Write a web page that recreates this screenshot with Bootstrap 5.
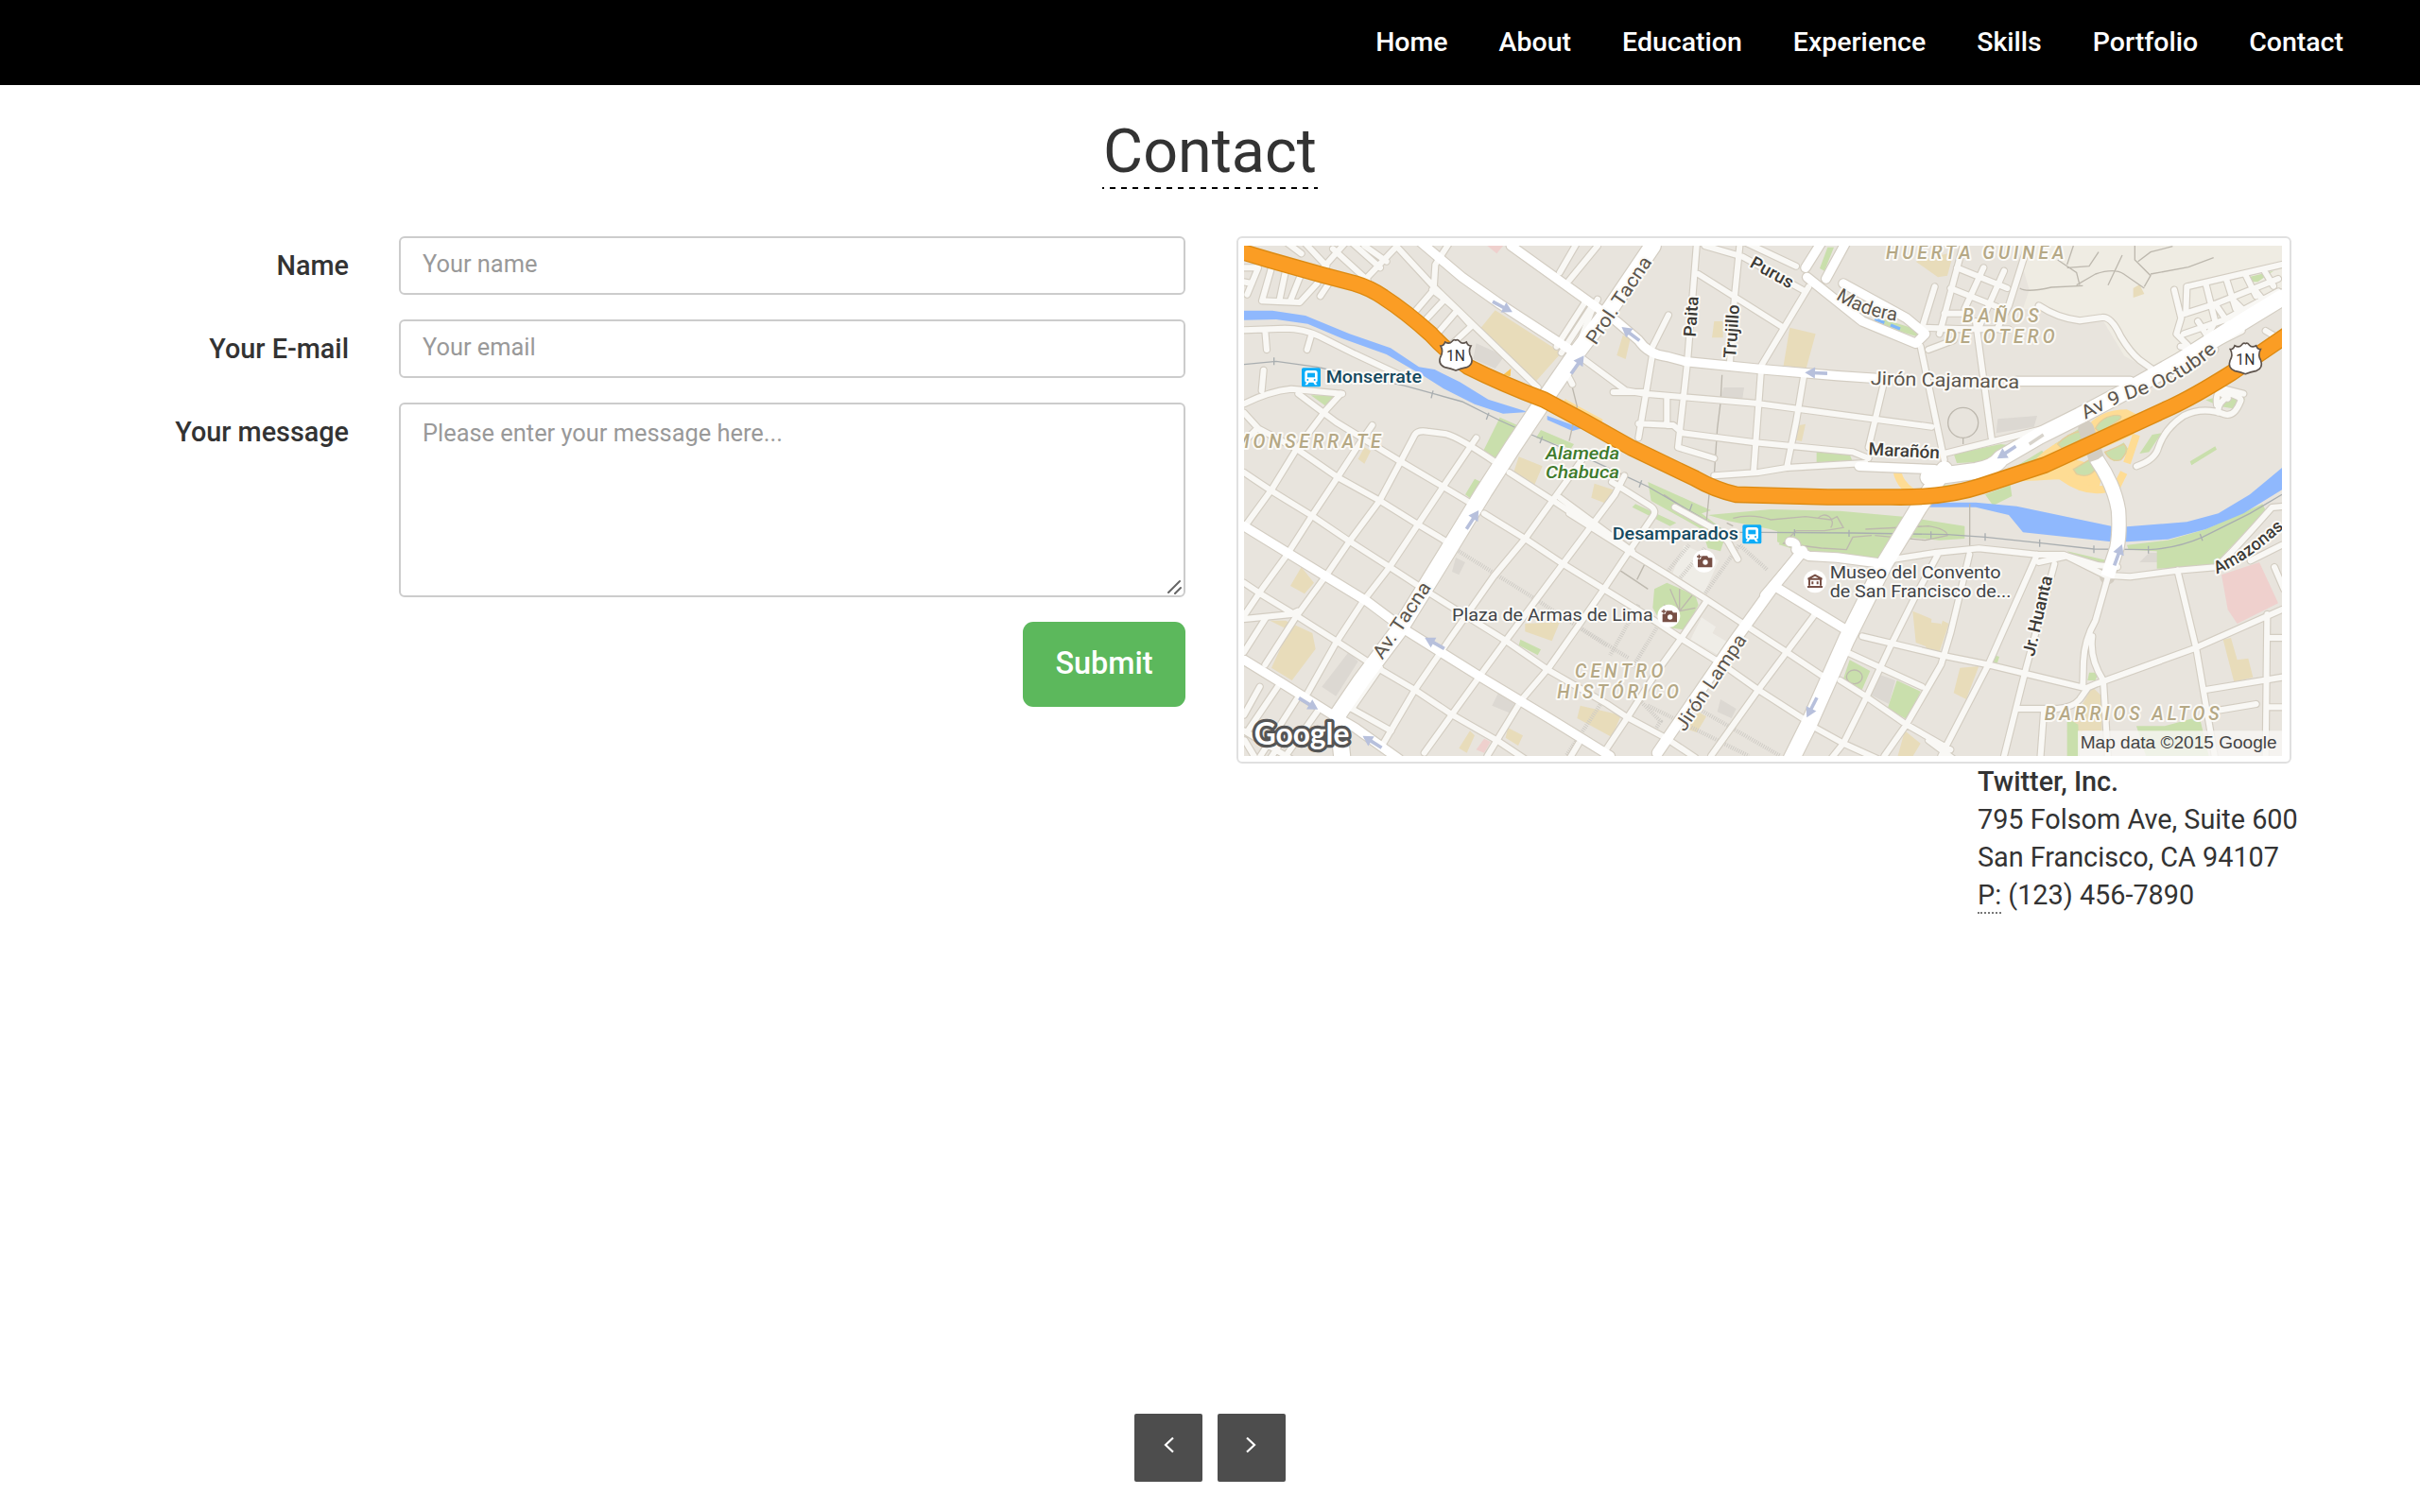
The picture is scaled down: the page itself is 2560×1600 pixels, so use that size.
<!DOCTYPE html>
<html lang="en">
<head>
<meta charset="utf-8">
<meta name="viewport" content="width=device-width, initial-scale=1">
<title>Contact</title>
<link rel="stylesheet" href="https://cdn.jsdelivr.net/npm/bootstrap@5.3.0/dist/css/bootstrap.min.css">
<style>
body{font-family:Roboto,"Liberation Sans",sans-serif;font-size:28.8px;line-height:40px;color:#333;background:#fff;height:1600px;overflow:hidden}
.topbar{height:90px;background:#000;padding:0 54px 0 0}
.topbar .nav-link{color:#fff;font-size:28.5px;font-weight:500;padding:0 27px;line-height:89px;white-space:nowrap}
.page-title{font-size:64.6px;font-weight:400;line-height:80px;height:80px;margin:30px 0 50px;width:228px;text-align:center;white-space:nowrap;color:#333;background:repeating-linear-gradient(90deg,#000 0 6px,transparent 6px 12px) -4px 100%/240px 2px no-repeat}
.contact-form{width:1254px}
.field-label{width:422px;padding:11px 53px 0 0;text-align:right;font-weight:500}
.field-row{margin-bottom:26px}
.form-control{border:2px solid #ccc;border-radius:6px;font-size:25.4px;line-height:36px;color:#555;height:62px;padding:9px 24px 13px 23px}
.form-control::placeholder{color:#999;opacity:1}
textarea.form-control{height:206px;resize:none;padding-top:12px}
.grip{position:absolute;right:4px;bottom:3px}
.btn-send{background:#5cb85c;color:#fff;width:172px;height:90px;border-radius:11px;font-size:32.4px;font-weight:500;padding:0 0 2px;border:0}
.map-pane{width:1116px;margin-left:54px}
.map-frame{border:2px solid #e0e0e0;border-radius:6px;height:558px;padding:8px 8px 6px 6px}
.map-frame svg{display:block;width:1098px;height:540px}
.office{margin:-1px 0 0 784px;white-space:nowrap}
.office strong{font-weight:500}
.office abbr{text-decoration:none;cursor:help;border-bottom:2px dotted #777;padding-bottom:1px}
.pager-bar{gap:16px;padding-bottom:32px}
.pager-btn{width:72px;height:72px;background:#4d4d4d;border-radius:2px;border:0;padding:0 0 6px}
.lbl{font-family:Roboto,sans-serif;stroke:#fbfaf7;stroke-width:12;stroke-linejoin:round;paint-order:stroke}
.area{fill:#b5a885;font-style:italic;font-weight:500;font-size:58px}
.street{fill:#3c3a36;font-weight:500;font-size:55px}
.avenue{fill:#5b554c;font-size:60px}
.place{fill:#3f4347;font-size:57px}
</style>
</head>
<body class="d-flex flex-column">
<nav class="topbar d-flex justify-content-end flex-shrink-0">
  <ul class="nav flex-nowrap">
    <li class="nav-item"><a class="nav-link" href="#">Home</a></li>
    <li class="nav-item"><a class="nav-link" href="#">About</a></li>
    <li class="nav-item"><a class="nav-link" href="#">Education</a></li>
    <li class="nav-item"><a class="nav-link" href="#">Experience</a></li>
    <li class="nav-item"><a class="nav-link" href="#">Skills</a></li>
    <li class="nav-item"><a class="nav-link" href="#">Portfolio</a></li>
    <li class="nav-item"><a class="nav-link" href="#">Contact</a></li>
  </ul>
</nav>
<main class="flex-grow-1 d-flex flex-column">
  <h1 class="page-title align-self-center flex-shrink-0">Contact</h1>
  <div class="d-flex align-items-start">
    <form class="contact-form flex-shrink-0">
      <div class="d-flex field-row"><label class="field-label flex-shrink-0" for="n">Name</label><input id="n" class="form-control" placeholder="Your name"></div>
      <div class="d-flex field-row"><label class="field-label flex-shrink-0" for="e">Your E-mail</label><input id="e" class="form-control" placeholder="Your email"></div>
      <div class="d-flex field-row"><label class="field-label flex-shrink-0" for="m">Your message</label>
        <div class="position-relative flex-fill"><textarea id="m" class="form-control" placeholder="Please enter your message here..."></textarea>
          <svg class="grip" width="16" height="16" viewBox="0 0 16 16" fill="none" stroke="#666" stroke-width="2" stroke-linecap="round"><path d="M2 14 14 2M9 15 15 9"/></svg></div></div>
      <div class="d-flex justify-content-end"><button type="button" class="btn btn-send">Submit</button></div>
    </form>
    <section class="map-pane flex-shrink-0">
      <div class="map-frame">
      <svg viewBox="48 60 3294 1620" preserveAspectRatio="none">
        <defs>
          <g id="minor">
            <!-- north-west -->
            <path d="M170 40l60 45M240 50l70 75M330 70l110 100M390 50l90 80M370 50l-80 90M530 60l120 130 330 320M525 70l-95 100M430 60l70 50M700 50l-45 70-5 80-60 70M645 200l40 30-65 70M685 230l40 35-60 70M725 265l45 50-70 65M1105 50l-55 95M1150 255l-95 145M1130 240l-90 140M48 130h45l-35 85M48 175l25 5M135 130l-30 105 120 5 55-60M180 140l-20 95M225 160l-30 75M320 175l-30 45"/>
            <path d="M48 328l130-5q60 0 110 25l110 55 160 75M115 330l5 60M262 342l-14 48M48 562q80-40 150-47l162 15M110 455l-6 65"/>
            <!-- west blocks -->
            <path d="M55 945l80-110 80-130 90-120 50-55M48 1235l57-85 80-110 80-125 80-120 75-115 35-50M48 1350l70-110M115 1390l100-155 95-130 75-110 93-125 67-125 45-85q10-15 40-10l60 8q40 10 160 92M250 1480l90-160 85-130 85-110 90-135 80-120 105-155"/>
            <path d="M48 1550l50-90M60 1600l95-140M100 1680l115-180M180 1680l100-140M50 1630l30 50M48 1600l150 90M130 1690l60-90"/>
            <path d="M48 780l82 55 130 80 125 85 125 80 130 85 240 150 130 90 190 110 60 40 130 70 90 60M48 590l45 50 122 65 130 90 135 75 120 75 100 60M90 640l-60 60M220 530l120 90 205 125 135 80 100 60M48 1130l52 35 115 70 125 80 100 65M48 1245l150-15 20-10M390 1530l125 70M480 1405l110 65 120 80 140 80 90 60"/>
            <!-- centre blocks -->
            <path d="M890 780l140 90 120 80 120 80 130 80 110 70 130 85 130 85 120 80M810 910l130 80 120 80 130 80 130 80 120 80 120 75 120 85 140 90M1860 1590l90 50 110 50M1050 860l230 170M1150 950l70 45M1080 910l190 120"/>
            <path d="M390 1530l90-130M490 1640l100-170 110-160 140-200 100-120 90-125 90-125M620 1670l90-125 105-145 70-95 175-235 90-120 75-100 30-60M820 1680l110-180 85-100 95-135 80-115 80-120 75-110q15-20-10-35l-120-75M1190 1670l80-120 90-140 80-110 75-110M1530 1680l150-210 90-120 90-120M1080 1690l30-50"/>
            <path d="M1415 890l100 55q60 30 80 75l20 35"/>
            <!-- east of the avenue -->
            <path d="M1910 1690l40-50 70-140 80-170 80-160 70-130M2080 1680l70-100 110-190 30-100 60-250M2260 1680l150-290 155-350M2460 1680l70-280 90-330M2575 1690l12-160M1960 1350l240 110M1940 1440l80 50 130 90 140 80M2010 1300l250 60 150 30 310 75 35-15 305-110 282-125M2500 1530h130q50-5 70-30l25-35M2220 1630l80 60M2110 1055l130-20 140-14 190 20h80l130 65 80 5 150-20 120-10q30-20 180-190l82-8M2570 1065l90-20 100 30 60 5M2790 1110l-40 140q-35 60-38 130l-2 75M2740 1300q-10 70 35 140l15 250M3010 1090l60 250 60 350M3295 1230l-5 460M3100 1470l242-40M3300 1305h42M3300 1525h42M3140 1535l120-20M3318 1080l30 70M3342 1010l-100 50"/>
            <!-- north-centre blocks -->
            <path d="M1485 50l-30 380-30 270 115 35M1622 50l-17 170-15 210M1510 60l120 35 190 105M1640 50l160 75M1490 150l270 170M1840 190l-150 250-25 340M1825 470l-25 150-30 145M2080 490l-50 210M1125 420l135 100 60 10 350 30 560 75M1220 525h100M1345 400l-45 270M1395 280l-40 80-10 20M1390 540v90M1300 625l110 5 30 25 230 30 310 30 50 20M1540 790l140-10 90-15 250-15M2195 380l75 360M2240 190l-40 130 140 5M1080 170l90-110M1080 480l10 20M1100 400l50-130 20-40"/>
            <path d="M2330 60l-75 280M2310 130l160 65M2290 195l150 60M2395 130l-60 130M2460 140l-80 180M2535 60l-60 190-35 70M2255 325h220M2220 390l80-30M2270 275h60M2370 300l50 370M2270 720l240-60 120-30M2570 250q60 40 130 48l70-10q30-5 60 60 30 50 60 75l70 50"/>
            <path d="M3040 190l302-70M3000 200l22 90-15 50 35 35M3040 190l-3 85M3100 180l30 120-50 95M3165 165l30 95M3225 150l35 70M3285 138l30 50M3020 280l110-35 200-80M3030 340l130-45 170-90M3020 380l110 10M3015 470q0-40 60-70l140-70M3140 520l30 25M3140 590q-5-30 30-50M2880 760q60-20 70-60 20-60 80-100 60-30 130-5 30 10 50-40 10-15-50-30-30-10-25 40M3160 515l60 15M3290 330l50 30M3075 300l45 70M3130 245l55 80M3190 235l60 60M3260 205l40 50"/>
          </g>
          <g id="midroad">
            <path d="M48 950l252 155 140 85 120 90 240 150 200 120 210 130M48 1375l122 75 160 100 70 40 140 100M610 50l130 110 120 85 230 150M895 60l285 205 50 35 70 60q30 45 90 52l60 16 250 25 230 20 150 10M2500 490h360M1730 1140l230 140M1780 1000q25 0 20 25l40 20 90 5 150 20M1700 1170l120-140"/>
            <path d="M1835 160l175 140 170 70 30-30-60-50-200-110M1830 130l50-80M1895 165l60-110M2000 760l240 10"/>
          </g>
          <g id="avenues">
            <path d="M1345 60l-135 200-110 145-100 145-100 150-90 140-110 180-160 260-120 160-75 110 15 140"/>
            <path d="M2270 770l-80 120-110 180-120 240-120 270-60 120"/>
            <path d="M2220 795l150-20q60-10 80-40l120-70 130-65 160-85 160-90 150-95 172-105"/>
          </g>
          <path id="lampa" d="M1820 1030l-90 110-130 180-240 350"/>
          <g id="bridge"><path d="M2720 640l35 100q55 80 68 160 5 70-5 120l-30 90"/></g>
          <path id="hwy" d="M30 76l100 30 170 48 100 26q50 15 90 43 70 45 150 117 50 55 120 105 110 55 240 104l130 70 150 84 200 96q60 35 130 51l290 8h200q170 4 290-36l200-66 400-184q70-32 190-107l190-130"/>
          <path id="octPath" d="M2718 612Q2790 570 2865 545 3020 500 3140 390"/>
          <path id="madPath" d="M1925 228Q2000 282 2125 300"/>
          <path id="amaPath" d="M3135 1102Q3240 1060 3370 935"/>
          <g id="shield"><path d="M-48-30q10 0 14-12 14 8 22-2 6-8 12-4 6-4 12 4 8 10 22 2 4 12 14 12-10 18 1 36 8 22-14 32-20 4-35 10-15-6-35-10-22-10-14-32 11-18 1-36z" fill="#fff" stroke="#5d534c" stroke-width="5"/><text y="18" text-anchor="middle" font-family="Roboto" font-size="50" fill="#333" textLength="60" lengthAdjust="spacingAndGlyphs">1N</text></g>
          <g id="way" fill="#b7c0dc" stroke="#b7c0dc"><path d="M-35 0H12" stroke-width="11"/><path d="M4-18 36 0 4 18z" stroke="none"/></g>
          <g id="train"><rect x="-30" y="-30" width="60" height="60" rx="5" fill="#0cacf7"/><path d="M-20-14q0-8 8-8h24q8 0 8 8v24q0 6-6 6l6 8h-8l-5-8h-14l-5 8h-8l6-8q-6 0-6-6z" fill="#fff"/><path d="M-12-14h24v14h-24z" fill="#0cacf7"/><circle cx="-11" cy="8" r="3" fill="#0cacf7"/><circle cx="11" cy="8" r="3" fill="#0cacf7"/></g>
          <g id="photo"><circle r="36" fill="#fff"/><path d="M-18-4h8l5-10h14l4 6h11v26h-42zM-23-14h14M-16-21v14" fill="#774f45" stroke="#774f45" stroke-width="4"/><circle cx="4" cy="4" r="8" fill="#fff"/></g>
        </defs>
        <rect x="0" y="0" width="3400" height="1700" fill="#e8e4dd"/>
        <path d="M2500 60h842v180l-330 220-60 10-110-60-70-115-252-35 20-60z" fill="#efece3"/>
        <!-- public buildings and plots -->
        <g fill="#e8dcba">
          <path d="M845 265l210 135-80 90-175-170zM1540 300h28v52h-35zM1780 320l82 20-30 110-72-10zM1250 345l24 10-15 65-28-12zM1810 630l20-4-12 55-20-4zM2180 110l120-30-20 75-30 5zM2870 195l20-12 15 30-35 12zM920 730l75 30-30 70-65-40zM1160 815l60 20-20 45-50-20zM430 700l20 12-20 40-20-15zM230 1080l40 50-30 35-45-25zM130 1250h50l85 40 10 50-75 100-65-40 55-120zM940 1260l110-5-25 60-85-30zM1115 1520l130 30-30 70-110-60zM765 1600l15 15-25 55-25-15zM885 1590l48 25-15 32-40-25zM2170 1220l60 25-10 90-40-15zM2265 1250l20 10-30 90-20-10 20-60zM2220 1255l40 5-10 95-40-5zM2320 1400l60-5-40 105-40-20zM2145 1600l50 40-30 50h-45zM1490 1540l25 15-30 50-30-10zM3155 1310l25-5 20 70 35-5 15 60-60 15zM2740 1460l30 30 0 110h-60l-40 80-10-80z"/>
        </g>
        <path d="M380 1350l30 30-70 110-45-30zM720 1050l30 15-20 40-22-10zM855 1480l55 20-15 45-60-25zM1570 510h65l-5 35h-70zM2440 610l125-10-10 35-120 20zM2060 1420l55 20-20 75-60-30zM1560 1500l50 30-15 30-45-20zM785 370l90 40-30 40-70-30zM2990 1035h-70l-30 30h60z" fill="#dcd8d2"/>
        <path d="M1500 1240l45 30-10 20 50 30 5 60-125-70zM1445 1010l110 50-55 120-100-60z" fill="#efede7"/>
        <g fill="#f0cdcb"><path d="M3150 1105l120-40 60 130-130 65-30-45zM820 60h50l-20 25zM810 1625l20 10-20 35-25-10z" fill-opacity=".9"/></g>
        <g fill="#c9dfac">
          <path d="M860 605l68 30-75 103-48-22zM990 645l105 45-10 15-110-35zM260 535h78l-22 40zM780 800l24 12-38 50-16-12zM1290 880l130 60-20 10-120-60zM1520 915l200-18 220 5 200 18 195 30v40l-80 5-85-8-100 70-230-20-95-28 20-35-50-15-130-25zM1330 810l200 90-30 10 80 60-20 60-40-10-20-60-160-90zM1350 1150l40-20 90 40 10 30-40 80-70-10-35-60zM925 1310l65 32-10 18-60-32zM1740 960l70 20-30 40-40-20z"/>
          <path d="M2850 1010l130-15 120-35 180-80 10 20-170 180-175 5v-55l-90-5zM2660 1030l130 30-10 15-60-5zM1900 65h20l-30 75-15-8zM2050 285l130 40 10 25-100-30zM1865 712l105 10 10 25-115 5zM3235 160l80-20-50 35h-30zM1970 1375l65 35-30 70-60-30zM2120 1440l75 35-40 90-65-35zM2880 1585h90l110-30 30 125h-200zM2660 1560l35 20 5 100h-40zM2430 1360l15 5-8 25-15-5zM2730 1415h30l-10 25h-25z"/>
          <path d="M2300 720l150-30 40 5-60 50-120 5zM2450 790l130-80 10 10-130 90zM2620 690l80-50 30 10-110 60zM2730 640l50-40 50 5-40 50zM2780 720l60-35 20 30-50 30zM3100 550l60-15 65 10-20 35-60-10zM2890 720l40-60 30-5-40 60zM3050 745l80-48 5 10-80 50zM2260 820h60v20l-70 10zM2400 850l80-30 5 35-60 30z"/>
        </g>
        <!-- interchange ramps -->
        <path d="M2590 710q50-35 130-70 40-60 130-60l40 20-20 60-180 80q100 20 70 90-60 10-90-30-120 5-190 10" fill="#fedc94"/>
        <path d="M2640 790q90 70 180 30l20-40M2880 660l-30 90" fill="none" stroke="#fedc94" stroke-width="24"/>
        <g fill="#c9dfac" stroke="#e3cd9b" stroke-width="4"><path d="M2630 690q30-35 78-42l-5 30-60 25zM2750 640q20-40 70-42 20 2 5 15l-60 40zM2780 715l60-25q20 20-10 50-30 10-50-25zM2680 770l50-30 20 30q-20 30-60 15z"/></g>
        <path d="M2120 770q5 45 50 75" fill="none" stroke="#fedc94" stroke-width="26"/>
        <path d="M1060 560l120 65" stroke="#fedc94" stroke-width="30"/>
        <path d="M870 470l25-20-2 25z" fill="#f9c558"/>
        <!-- river -->
        <path d="M48 266l90 0 105 16 140 58 130 45 90 60 50 8 80 40 90 55 127 40-80 5-90-30-100-50-60-38-120-70-140-50-110-47-100-14-102 2zM1010 600l110 40-30 8-80-35zM2170 875h200l130 12 300 63 50 2 190-15 100-27 100-60 102-85v70l-122 75-120 50-120 32-130 8h-50l-280-30-45-55-105-25h-200z" fill="#8fb8fd"/>
        <path d="M2050 293l30 12M2100 312l30 12" stroke="#7db6fb" stroke-width="10"/>
        <!-- paths, hill tracks and railway -->
        <g fill="none" stroke="#bdb8ae" stroke-width="4">
          <path d="M2510 195q20 15 100-3l100-5M2630 105l60 40 10 40M2660 130l70-5 30-45M2690 185l60-35q60-20 90 0l65 45M2790 185l45-95M2875 60v45l50 50-20 35M2885 110l40-30 70-18M2925 150l120-22 80-30M2680 60l-20 60"/>
          <circle cx="2330" cy="622" r="48"/><path d="M2330 670v20M2351 880v150M1525 840l-10 100M1600 950l-20-10M1565 470l-5 90-10 80-10 150M1090 510l15 60-25 110M1240 1090l90 60M1320 1070l-25 50M1380 850l60 40" />
          <path d="M1600 925q60-15 120 5l110-10 80 10 20-10 20 35-60 10h-90l-40 40 120 15 80 5 20-40 60-5M1870 925a25 25 0 1 1 40 30M1960 1430a25 22 0 1 0 50-2 25 22 0 1 0-50 2M1400 1150l30 70M1430 1220l40-50M1430 1220l50-10M1430 1220l-50-20M1430 1220v-70M2020 960l200-10q60 10 60 30l-70 15-160-15"/>
          <path d="M48 437l102-10 130 18 280 60 90 25 90 25 120 60 100 45 200 85 170 80 130 75 120 70 110 0 290 2 300 5 120 8 170 18 175 20 175 2q90-5 170-40l150-75 102-60" stroke="#a9aeb0"/>
          <path d="M143 415v24M648 520l-6 24M825 590l-8 22M995 665l-8 22M1310 805l-8 22M1470 880l-8 22M1795 960v22M1968 962v22M2228 967v22M2400 973v24M2573 992v24M2745 1012v24M2918 1013v24M3082 975l8 22" stroke="#a9aeb0"/>
        </g>
        <g fill="none" stroke="#cfccc6" stroke-width="13" stroke-dasharray="3 4"><path d="M730 1030l240 150 230 150M1110 1270l160 100M1300 1200l-90 160M1390 1220l-110 180M1500 1180l120-170 90 80M1330 1520l320 160M1190 1500l-120 180M1490 1530l260 150M1310 1510l60 60-20 30M1380 1110l80-100M1420 1130l90-110"/></g>
        <!-- roads: casing first, surface second -->
        <g fill="none" stroke-linejoin="round" stroke-linecap="round">
          <g stroke="#d3cdc2"><use href="#minor" stroke-width="25"/><use href="#midroad" stroke-width="35"/><use href="#lampa" stroke-width="40"/><use href="#avenues" stroke-width="58"/><use href="#bridge" stroke-width="50"/></g>
          <use href="#minor" stroke="#f9f8f5" stroke-width="18"/>
          <use href="#midroad" stroke="#fff" stroke-width="28"/>
          <use href="#lampa" stroke="#fff" stroke-width="33"/>
          <use href="#avenues" stroke="#fff" stroke-width="51"/>
          <use href="#hwy" stroke="#dc8a12" stroke-width="53"/>
          <use href="#hwy" stroke="#fb9d24" stroke-width="45"/>
        </g>
        <use href="#bridge" fill="none" stroke="#fff" stroke-width="43" stroke-dasharray="0 105 600"/>
        <path d="M2540 690l45-30" stroke="#d8d4cc" stroke-width="10"/>
        <use href="#way" transform="translate(868 254) rotate(28)"/>
        <use href="#way" transform="translate(1106 438) rotate(-55)"/>
        <use href="#way" transform="translate(1275 340) rotate(217)"/>
        <use href="#way" transform="translate(1864 464) rotate(182)"/>
        <use href="#way" transform="translate(2468 716) rotate(147)"/>
        <use href="#way" transform="translate(773 930) rotate(-57)"/>
        <use href="#way" transform="translate(653 1322) rotate(209)"/>
        <use href="#way" transform="translate(252 1514) rotate(31)"/>
        <use href="#way" transform="translate(455 1635) rotate(212)"/>
        <use href="#way" transform="translate(1850 1526) rotate(117)"/>
        <use href="#way" transform="translate(2822 1042) rotate(-70)"/>
        <use href="#shield" transform="translate(720 408)"/>
        <use href="#shield" transform="translate(3226 419)"/>
        <use href="#train" transform="translate(261 478)"/>
        <use href="#train" transform="translate(1660 976)"/>
        <use href="#photo" transform="translate(1508 1061)"/>
        <use href="#photo" transform="translate(1396 1235)"/>
        <g transform="translate(1860 1126)"><circle r="36" fill="#fff"/><path d="M-22-8 0-20 22-8zM-18-5v18M18-5v18M-24 17h48M-8 0v9M8 0v9" fill="none" stroke="#774f45" stroke-width="6"/></g>
        <!-- labels -->
        <g class="lbl">
          <g class="area">
            <text x="16" y="702" textLength="466">MONSERRATE</text>
            <text x="2085" y="103" textLength="565">HUERTA GUINEA</text>
            <text x="2328" y="302" textLength="242">BAÑOS</text>
            <text x="2273" y="368" textLength="348">DE OTERO</text>
            <text x="1098" y="1431" textLength="280">CENTRO</text>
            <text x="1042" y="1497" textLength="386">HISTÓRICO</text>
            <text x="2588" y="1566" textLength="555">BARRIOS ALTOS</text>
          </g>
          <g fill="#15495f" font-size="56" font-weight="500">
            <text x="308" y="496" textLength="304" lengthAdjust="spacingAndGlyphs">Monserrate</text>
            <text x="1217" y="993" textLength="400" lengthAdjust="spacingAndGlyphs">Desamparados</text>
          </g>
          <g fill="#3e7a2c" font-size="57" font-style="italic" font-weight="500"><text x="1005" y="739" textLength="234" lengthAdjust="spacingAndGlyphs">Alameda</text><text x="1005" y="798" textLength="234" lengthAdjust="spacingAndGlyphs">Chabuca</text></g>
          <g class="avenue">
            <text transform="translate(1164 378) rotate(-56)" textLength="322" lengthAdjust="spacingAndGlyphs">Prol. Tacna</text>
            <text transform="translate(487 1376) rotate(-56)" textLength="280" lengthAdjust="spacingAndGlyphs">Av. Tacna</text>
            <text transform="translate(1446 1605) rotate(-56)" textLength="355" lengthAdjust="spacingAndGlyphs">Jirón Lampa</text>
            <text x="2036" y="501" textLength="472" lengthAdjust="spacingAndGlyphs" transform="rotate(1.500 2036 501)">Jirón Cajamarca</text>
            <text><textPath href="#madPath" textLength="208" lengthAdjust="spacingAndGlyphs">Madera</textPath></text>
            <text><textPath href="#octPath" textLength="475" lengthAdjust="spacingAndGlyphs">Av 9 De Octubre</textPath></text>
          </g>
          <g class="street">
            <text transform="translate(1481 350) rotate(-86)" textLength="128" lengthAdjust="spacingAndGlyphs">Paita</text>
            <text transform="translate(1608 418) rotate(-86)" textLength="170" lengthAdjust="spacingAndGlyphs">Trujillo</text>
            <text transform="translate(1650 125) rotate(29)" textLength="148" lengthAdjust="spacingAndGlyphs">Purus</text>
            <text transform="translate(2029 724) rotate(3)" textLength="226" lengthAdjust="spacingAndGlyphs">Marañón</text>
            <text transform="translate(2555 1366) rotate(-77)" textLength="260" lengthAdjust="spacingAndGlyphs">Jr. Huanta</text>
            <text><textPath href="#amaPath">Amazonas</textPath></text>
          </g>
          <g class="place">
            <text x="708" y="1252" textLength="638" lengthAdjust="spacingAndGlyphs">Plaza de Armas de Lima</text>
            <text x="1907" y="1117" textLength="543" lengthAdjust="spacingAndGlyphs">Museo del Convento</text>
            <text x="1907" y="1177" textLength="575" lengthAdjust="spacingAndGlyphs">de San Francisco de...</text>
          </g>
        </g>
        <text x="80" y="1645" textLength="302" lengthAdjust="spacingAndGlyphs" font-family="Lato" font-size="100" font-weight="700" fill="#fff" stroke="#555" stroke-width="20" stroke-linejoin="round" paint-order="stroke">Google</text>
        <rect x="2694" y="1600" width="648" height="80" fill="#f8f7f4" fill-opacity=".82"/>
        <text x="2702" y="1657" textLength="624" lengthAdjust="spacingAndGlyphs" font-family="Liberation Sans" font-size="56" fill="#444">Map data ©2015 Google</text>
      </svg>
      </div>
      <address class="office"><strong>Twitter, Inc.</strong><br>795 Folsom Ave, Suite 600<br>San Francisco, CA 94107<br><abbr title="Phone">P:</abbr> (123) 456-7890</address>
    </section>
  </div>
</main>
<footer class="pager-bar d-flex justify-content-center flex-shrink-0">
  <button class="pager-btn d-flex align-items-center justify-content-center" aria-label="Previous"><svg width="12" height="18" viewBox="0 0 12 18" fill="none" stroke="#fff" stroke-width="2.2"><path d="M11 1.500 3 9l8 7.500"/></svg></button>
  <button class="pager-btn d-flex align-items-center justify-content-center" aria-label="Next"><svg width="12" height="18" viewBox="0 0 12 18" fill="none" stroke="#fff" stroke-width="2.2"><path d="M1 1.500 9 9l-8 7.500"/></svg></button>
</footer>
<script src="https://cdn.jsdelivr.net/npm/bootstrap@5.3.0/dist/js/bootstrap.bundle.min.js"></script>
</body>
</html>
